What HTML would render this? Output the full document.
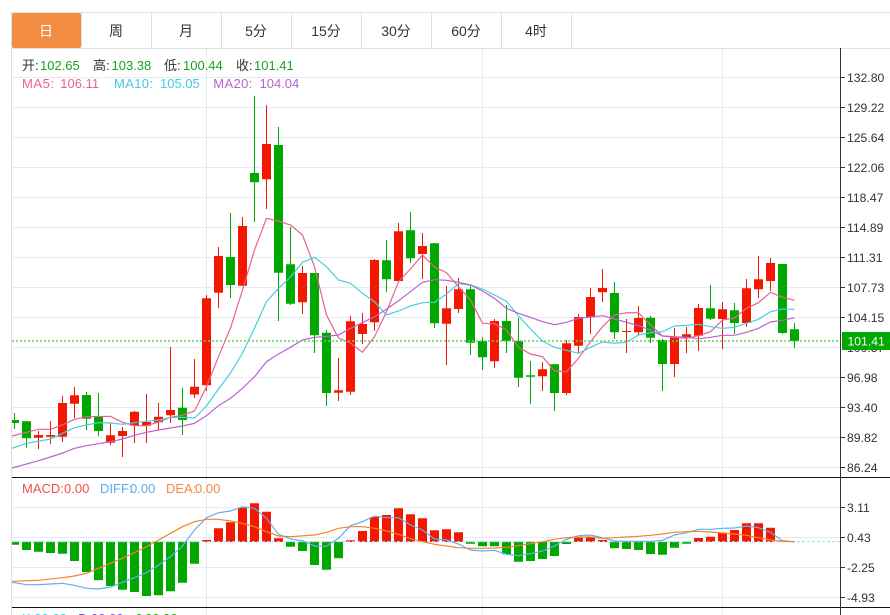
<!DOCTYPE html>
<html><head><meta charset="utf-8"><style>
html,body{margin:0;padding:0;background:#fff;width:890px;height:615px;overflow:hidden}
svg{display:block}
text{font-family:"Liberation Sans","Noto Sans CJK SC",sans-serif}
</style></head><body>
<svg width="890" height="615" viewBox="0 0 890 615" xmlns="http://www.w3.org/2000/svg">
<rect x="12" y="13" width="69" height="35" rx="2" fill="#f48c42"/>
<path d="M11 12.5H890M11 48.5H890" stroke="#dfe2e5" fill="none"/>
<path d="M11.5 12V615M81.5 13V48M151.5 13V48M221.5 13V48M291.5 13V48M361.5 13V48M431.5 13V48M501.5 13V48M571.5 13V48" stroke="#dcdfe2" fill="none"/>
<path d="M12 77.5H840M12 107.5H840M12 137.5H840M12 167.5H840M12 197.5H840M12 227.5H840M12 257.5H840M12 287.5H840M12 317.5H840M12 347.5H840M12 377.5H840M12 407.5H840M12 437.5H840M12 467.5H840M12 507.5H840M12 537.5H840M12 567.5H840M12 597.5H840M206.5 49V615M482.5 49V615M722.5 49V615" stroke="#e3ecf3" fill="none"/>
<g font-size="14" fill="#333" text-anchor="middle">
<text x="46" y="36" fill="#fff">日</text><text x="116" y="36">周</text><text x="186" y="36">月</text><text x="256" y="36">5分</text><text x="326" y="36">15分</text><text x="396" y="36">30分</text><text x="466" y="36">60分</text><text x="536" y="36">4时</text>
</g>
<clipPath id="c"><rect x="12" y="49" width="828" height="428"/></clipPath>
<clipPath id="d"><rect x="12" y="478" width="828" height="129"/></clipPath>
<g clip-path="url(#c)" fill="none">
<path stroke="#00a800" d="M14.5 413V429M26.5 421V448M86.5 392V430M98.5 393V436M182.5 388V435M230.5 213V298M254.5 96V222M278.5 127V321M290.5 227V305M314.5 273V353M326.5 330V406M386.5 240V292M410.5 212V263M434.5 243V328M470.5 286V355M482.5 337V370M506.5 305V353M518.5 318V387M530.5 361V404M554.5 364V411M614.5 282V339M650.5 316V343M662.5 339V391M710.5 285V320M734.5 303V334M782.5 264V334M794.5 323V348"/>
<path stroke="#f51800" d="M38.5 431V449M50.5 421V444M62.5 396V442M74.5 387V418M110.5 423V445M122.5 427V457M134.5 411V443M146.5 394V443M158.5 403V430M170.5 347V423M194.5 359V398M206.5 295V391M218.5 247V308M242.5 217V286M266.5 105V209M302.5 266V314M338.5 358V401M350.5 316V395M362.5 313V344M374.5 259V331M398.5 223V282M422.5 233V279M446.5 286V365M458.5 278V313M494.5 319V368M542.5 362V391M566.5 340V395M578.5 314V353M590.5 288V334M602.5 269V302M626.5 319V353M638.5 306V335M674.5 328V377M686.5 327V353M698.5 304V351M722.5 302V349M746.5 279V327M758.5 256V298M770.5 258V291"/>
<path stroke="#00a800" stroke-width="9" d="M14.5 420V423M26.5 421.3V438.3M86.5 395V418.7M98.5 416.7V431M182.5 407.7V420M230.5 257V285M254.5 173V182.3M278.5 145V272.7M290.5 264.3V303.7M314.5 273V335.3M326.5 332.7V393M386.5 260.3V279.3M410.5 230.3V258.3M434.5 243.3V323.3M470.5 289.3V342.7M482.5 341V357.3M506.5 321V341M518.5 341V377.7M530.5 375.3V376.7M554.5 364.3V393M614.5 293V332.3M650.5 317.7V337.7M662.5 340V364M710.5 308.3V318.7M734.5 310.3V323M782.5 264V333M794.5 329.3V341"/>
<path stroke="#f51800" stroke-width="9" d="M38.5 435V437.7M50.5 435V436.7M62.5 403V436.7M74.5 395.3V403.7M110.5 435.3V442.7M122.5 431V436M134.5 411.7V425.7M146.5 422V425.7M158.5 416.7V422.3M170.5 410V415.3M194.5 386.7V394.5M206.5 298.3V385.3M218.5 256V292.7M242.5 226V285.7M266.5 144V179.3M302.5 273V302.3M338.5 390.3V392.7M350.5 321.3V391.7M362.5 324V334M374.5 260V322.3M398.5 231.3V281M422.5 246V254M446.5 308.3V323.7M458.5 289.3V309M494.5 321V361.3M542.5 369.3V376.3M566.5 343.3V393M578.5 317V345.7M590.5 297V317.3M602.5 288V292.3M626.5 331V332M638.5 318V332.3M674.5 337.3V364M686.5 334.3V337M698.5 308V335.7M722.5 309.3V319M746.5 288.3V323M758.5 279.3V289.3M770.5 263V281"/>
<path stroke="#ee5f8d" stroke-width="1.2" d="M12 436L38.5 429.3L50.5 429.3L62.5 425L74.5 419.3L86.5 416.7L110.5 416.3L122.5 422.3L134.5 425.7L146.5 425.7L158.5 422L170.5 417.3L182.5 415.3L194.5 411L206.5 386.7L218.5 356.7L230.5 328L242.5 290L254.5 250L266.5 218.3L278.5 221L290.5 225L302.5 235L314.5 266.7L326.5 315L338.5 338L350.5 343L362.5 352.3L374.5 336.7L386.5 311.7L398.5 281.7L410.5 269L422.5 255L434.5 267L446.5 272.7L458.5 286.7L470.5 300L482.5 323.3L494.5 323.7L506.5 330L518.5 347.3L530.5 354L542.5 356.7L554.5 371L566.5 371.7L578.5 358.3L590.5 341.7L602.5 326.7L614.5 315L626.5 312.7L638.5 312.8L650.5 325L662.5 336L674.5 337.3L686.5 338.3L698.5 335.7L710.5 331.7L722.5 320L734.5 318L746.5 308.3L758.5 302.7L770.5 292.3L782.5 297.3L794.5 300.3"/>
<path stroke="#45cfe0" stroke-width="1.2" d="M12 448.3L26.5 443.3L50.5 439L62.5 433.3L74.5 427.7L86.5 425L98.5 422.7L110.5 423L122.5 424.3L134.5 422.7L146.5 421.3L158.5 420L170.5 417.7L182.5 417.3L194.5 418L206.5 406L218.5 389L230.5 373L242.5 353L254.5 328L266.5 301.7L278.5 288.3L290.5 277L302.5 262.3L314.5 257.3L326.5 266.7L338.5 280L350.5 283.3L362.5 293.3L374.5 301.7L386.5 315L398.5 311L410.5 306L422.5 302.7L434.5 302.3L446.5 294L458.5 283.7L470.5 285L482.5 289L494.5 295L506.5 301.3L518.5 316L530.5 329L542.5 341L554.5 347.3L566.5 350.3L578.5 353.3L590.5 347.3L602.5 342L614.5 343.3L626.5 342.3L638.5 335L650.5 332.7L662.5 331.7L674.5 326L686.5 325.3L698.5 324.3L710.5 326.7L722.5 328.3L734.5 327.3L746.5 323.3L758.5 319.3L770.5 311.7L782.5 309L794.5 309.3"/>
<path stroke="#b964d0" stroke-width="1.2" d="M12 468L38.5 460.7L50.5 457L62.5 453L74.5 448.3L86.5 445.7L110.5 441.7L122.5 439L134.5 435.3L146.5 432.3L158.5 430L170.5 428L182.5 426L194.5 423.3L206.5 415.7L218.5 405.7L230.5 398.3L242.5 388.3L254.5 376.7L266.5 361.7L278.5 354L290.5 347.3L302.5 340L314.5 337.3L326.5 336.3L338.5 335L350.5 328.3L362.5 322.7L374.5 316.7L386.5 309.3L398.5 300.7L410.5 291.7L422.5 282.3L434.5 279.7L446.5 280.3L458.5 282.3L470.5 285L482.5 291L494.5 298.3L506.5 308.3L518.5 313.3L530.5 317.3L542.5 321.7L554.5 324.7L566.5 322.3L578.5 318.3L590.5 317L602.5 315.7L614.5 319L626.5 322.3L638.5 325.7L650.5 330L662.5 336L674.5 336.7L686.5 337.3L698.5 338.7L710.5 337.3L722.5 335.3L734.5 335.3L746.5 332.3L758.5 328.3L770.5 322L782.5 320.3L794.5 317.7"/>
</g>
<path d="M12 341H840" stroke="#63d065" stroke-width="1.4" stroke-dasharray="2 2" fill="none"/>
<g clip-path="url(#d)" fill="none">
<path stroke="#00a800" stroke-width="9" d="M14.5 541.7V544.7M26.5 541.7V550M38.5 541.7V551.7M50.5 541.7V553M62.5 541.7V553.7M74.5 541.7V561M86.5 541.7V572M98.5 541.7V580.3M110.5 541.7V586M122.5 541.7V589.7M134.5 541.7V592M146.5 541.7V596M158.5 541.7V595.3M170.5 541.7V591.3M182.5 541.7V582.7M194.5 541.7V563.7M290.5 541.7V546.7M302.5 541.7V551M314.5 541.7V565M326.5 541.7V569.7M338.5 541.7V558.3M470.5 541.7V543.7M482.5 541.7V546.3M494.5 541.7V546.3M506.5 541.7V554.3M518.5 541.7V561.7M530.5 541.7V561M542.5 541.7V559M554.5 541.7V556M566.5 541.7V544M614.5 541.7V548.3M626.5 541.7V549M638.5 541.7V550M650.5 541.7V554M662.5 541.7V554.7M674.5 541.7V547.7M686.5 541.7V543.7"/>
<path stroke="#f51800" stroke-width="9" d="M206.5 542V540M218.5 542V528.3M230.5 542V522.3M242.5 542V507.7M254.5 542V503.3M266.5 542V511.7M278.5 542V538.3M350.5 542V540.3M362.5 542V531M374.5 542V517M386.5 542V515M398.5 542V508.3M410.5 542V514.3M422.5 542V518.3M434.5 542V530.3M446.5 542V529.3M458.5 542V532.3M578.5 542V537.7M590.5 542V536.7M602.5 542V540M698.5 542V538M710.5 542V536.7M722.5 542V532.7M734.5 542V530M746.5 542V523.3M758.5 542V523.3M770.5 542V527.7"/>
<path stroke="#f7b3a8" stroke-width="9" d="M782.5 542V540.3"/>
<path stroke="#a5dcf2" stroke-width="1.2" stroke-dasharray="3 2" d="M12 541.7H840"/>
<path stroke="#63adf0" stroke-width="1.2" d="M12 582.3L26.5 584.7L38.5 584.7L50.5 584L62.5 583.3L74.5 585.3L86.5 588.3L98.5 589L110.5 587L122.5 582.3L134.5 577.7L146.5 572.7L158.5 565L170.5 556.7L182.5 546L194.5 530L206.5 517.7L218.5 512.7L230.5 511L242.5 506.7L254.5 508.3L266.5 518.3L278.5 534.3L290.5 539L302.5 540.7L314.5 546L326.5 546.3L338.5 538.3L350.5 525.7L362.5 521.7L374.5 516L386.5 517.7L398.5 517.7L410.5 525L422.5 530L434.5 539L446.5 540L458.5 544L470.5 550L482.5 551L494.5 550.3L506.5 554.3L518.5 555.7L530.5 553.7L542.5 551L554.5 546L566.5 539.3L578.5 535.7L590.5 535L602.5 537.7L614.5 541L626.5 541.3L650.5 541.3L662.5 540.3L674.5 535L686.5 532.7L698.5 529.3L710.5 529.3L722.5 528.3L734.5 528L746.5 526L758.5 527.7L770.5 532.3L782.5 540.7L794.5 541.7"/>
<path stroke="#f5832a" stroke-width="1.2" d="M12 581.3L38.5 580.3L62.5 577.7L74.5 576L86.5 573.3L98.5 568.3L110.5 563.3L122.5 558.3L134.5 552.7L146.5 546.7L158.5 540L170.5 533.3L182.5 526.7L194.5 521.7L206.5 519.3L218.5 519.3L230.5 521L242.5 523.3L254.5 526.7L266.5 531.7L278.5 536L290.5 536.7L314.5 535L326.5 532.3L338.5 528.3L350.5 526.7L362.5 526.7L374.5 528.3L386.5 531L398.5 534.3L410.5 538.7L422.5 541.7L434.5 544.3L446.5 546L458.5 547.7L470.5 548.3L482.5 548.3L494.5 548L506.5 547.3L518.5 545.7L530.5 543.7L542.5 541.7L554.5 539.3L566.5 537.7L578.5 537L590.5 537L602.5 538.3L614.5 537.7L626.5 537L638.5 536.3L650.5 535.3L662.5 534L674.5 532.3L686.5 531.7L698.5 531.3L710.5 532L722.5 533L734.5 534L746.5 535.3L758.5 537.7L770.5 540L782.5 541.3L794.5 541.7"/>
</g>
<path d="M12 477.5H890M12 607.5H890" stroke="#111" fill="none"/>
<path d="M840.5 48V615" stroke="#333" fill="none"/>
<path d="M840 77.5h5M840 107.5h5M840 137.5h5M840 167.5h5M840 197.5h5M840 227.5h5M840 257.5h5M840 287.5h5M840 317.5h5M840 377.5h5M840 407.5h5M840 437.5h5M840 467.5h5M840 507.5h5M840 537.5h5M840 567.5h5M840 597.5h5" stroke="#333" fill="none"/>
<g font-size="12.2" fill="#333">
<text x="847" y="82">132.80</text><text x="847" y="112">129.22</text><text x="847" y="142">125.64</text><text x="847" y="172">122.06</text><text x="847" y="202">118.47</text><text x="847" y="232">114.89</text><text x="847" y="262">111.31</text><text x="847" y="292">107.73</text><text x="847" y="322">104.15</text><text x="847" y="352">100.57</text><text x="847" y="382">96.98</text><text x="847" y="412">93.40</text><text x="847" y="442">89.82</text><text x="847" y="472">86.24</text>
<text x="847" y="512">3.11</text><text x="847" y="542">0.43</text><text x="847" y="572">-2.25</text><text x="847" y="602">-4.93</text>
</g>
<rect x="842" y="332" width="48" height="18" fill="#00a800"/>
<text x="847.500" y="345.500" font-size="12.2" fill="#fff">101.41</text>
<g font-size="13">
<text x="22" y="70" fill="#333">开:</text><text x="40" y="70" fill="#16a31e">102.65</text>
<text x="93" y="70" fill="#333">高:</text><text x="111.500" y="70" fill="#16a31e">103.38</text>
<text x="164" y="70" fill="#333">低:</text><text x="183" y="70" fill="#16a31e">100.44</text>
<text x="236" y="70" fill="#333">收:</text><text x="254" y="70" fill="#16a31e">101.41</text>
<text x="22" y="88" fill="#ee5f8d" textLength="32">MA5:</text><text x="60.300" y="88" fill="#ee5f8d">106.11</text>
<text x="114" y="88" fill="#3fcbe0" textLength="39">MA10:</text><text x="160" y="88" fill="#3fcbe0">105.05</text>
<text x="213.300" y="88" fill="#b964d0" textLength="39">MA20:</text><text x="259.500" y="88" fill="#b964d0">104.04</text>
<text x="22" y="493" fill="#f05050">MACD:</text><text x="64" y="493" fill="#f05050">0.00</text>
<text x="100" y="493" fill="#5cabef">DIFF:</text><text x="130" y="493" fill="#5cabef">0.00</text>
<text x="166" y="493" fill="#f5893c">DEA:</text><text x="195" y="493" fill="#f5893c">0.00</text>
<text x="22" y="623" fill="#3fcbe0">K:00.00</text>
<text x="78" y="623" fill="#7a4fc0">D:00.00</text>
<text x="135" y="623" fill="#16a31e">J:00.00</text>
</g>
</svg>
</body></html>
